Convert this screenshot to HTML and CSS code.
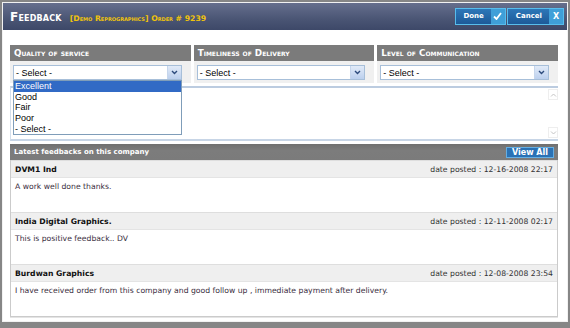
FILE: index.html
```html
<!DOCTYPE html>
<html lang="en">
<head>
    <meta charset="UTF-8">
    <title>Feedback</title>
    <link rel="stylesheet" href="styles.css">
</head>
<body>
    <div class="dialog">
        <div class="titlebar">
            <div class="title">
                <span class="title-main">Feedback</span>
                <span class="title-sub">[Demo Reprographics] Order # 9239</span>
            </div>
            <div class="actions">
                <a class="btn" href="#">
                    <span class="btn-label">Done</span>
                    <span class="btn-icon">
                        <svg width="9" height="8" viewBox="0 0 9 8"><path d="M1 4.5 L3.5 7 L8 1" fill="none" stroke="#fff" stroke-width="1.8"/></svg>
                    </span>
                </a>
                <a class="btn" href="#">
                    <span class="btn-label">Cancel</span>
                    <span class="btn-icon">X</span>
                </a>
            </div>
        </div>

        <div class="content">
            <div class="ratings">
                <div class="rating">
                    <div class="rating-head">Quality of service</div>
                    <div class="rating-body">
                        <div class="select">
                            <span class="select-text">- Select -</span>
                            <span class="select-arrow"><svg width="7" height="5" viewBox="0 0 7 5"><path d="M1 1 L3.5 3.5 L6 1" fill="none" stroke="#2c4a7c" stroke-width="1.4"/></svg></span>
                            <ul class="options">
                                <li class="selected">Excellent</li>
                                <li>Good</li>
                                <li>Fair</li>
                                <li>Poor</li>
                                <li>- Select -</li>
                            </ul>
                        </div>
                    </div>
                </div>
                <div class="rating">
                    <div class="rating-head">Timeliness of Delivery</div>
                    <div class="rating-body">
                        <div class="select">
                            <span class="select-text">- Select -</span>
                            <span class="select-arrow"><svg width="7" height="5" viewBox="0 0 7 5"><path d="M1 1 L3.5 3.5 L6 1" fill="none" stroke="#2c4a7c" stroke-width="1.4"/></svg></span>
                        </div>
                    </div>
                </div>
                <div class="rating">
                    <div class="rating-head">Level of Communication</div>
                    <div class="rating-body">
                        <div class="select">
                            <span class="select-text">- Select -</span>
                            <span class="select-arrow"><svg width="7" height="5" viewBox="0 0 7 5"><path d="M1 1 L3.5 3.5 L6 1" fill="none" stroke="#2c4a7c" stroke-width="1.4"/></svg></span>
                        </div>
                    </div>
                </div>
            </div>

            <div class="comment-box">
                <div class="scrollbar">
                    <span class="scroll-btn"><svg width="7" height="4" viewBox="0 0 7 4"><path d="M1 3.5 L3.5 1 L6 3.5" fill="none" stroke="#c4c4c4" stroke-width="1"/></svg></span>
                    <span class="scroll-btn"><svg width="7" height="4" viewBox="0 0 7 4"><path d="M1 0.5 L3.5 3 L6 0.5" fill="none" stroke="#c4c4c4" stroke-width="1"/></svg></span>
                </div>
            </div>

            <div class="section-bar">
                <span>Latest feedbacks on this company</span>
                <a class="view-all" href="#">View All</a>
            </div>

            <div class="feedbacks">
                <div class="feedback">
                    <div class="feedback-head">
                        <span class="feedback-name">DVM1 Ind</span>
                        <span class="feedback-date">date posted : 12-16-2008 22:17</span>
                    </div>
                    <p class="feedback-text">A work well done thanks.</p>
                </div>
                <div class="feedback">
                    <div class="feedback-head">
                        <span class="feedback-name">India Digital Graphics.</span>
                        <span class="feedback-date">date posted : 12-11-2008 02:17</span>
                    </div>
                    <p class="feedback-text">This is positive feedback.. DV</p>
                </div>
                <div class="feedback">
                    <div class="feedback-head">
                        <span class="feedback-name">Burdwan Graphics</span>
                        <span class="feedback-date">date posted : 12-08-2008 23:54</span>
                    </div>
                    <p class="feedback-text">I have received order from this company and good follow up , immediate payment after delivery.</p>
                </div>
            </div>
        </div>
    </div>
</body>
</html>
```

FILE: styles.css
```css
body {
    margin: 0;
    padding: 2px 2px 6px 2px;
    background-color: #868686;
    font-family: "DejaVu Sans", Verdana, sans-serif;
    font-size: 7.7px;
    color: #222;
}

.dialog {
    height: 320px;
    box-sizing: border-box;
    border: 1px solid #f2f2f2;
    background-color: #fff;
}

/* title bar */
.titlebar {
    height: 27px;
    display: flex;
    align-items: center;
    justify-content: space-between;
    padding: 0 3px 0 7px;
    background: linear-gradient(#666f8d, #4a5574 60%, #3d4868);
}

.title {
    display: flex;
    align-items: baseline;
    gap: 8px;
}

.title-main {
    font-variant: small-caps;
    font-size: 12px;
    font-weight: bold;
    color: #fff;
    letter-spacing: 0.2px;
}

.title-sub {
    font-variant: small-caps;
    font-size: 7.7px;
    font-weight: bold;
    color: #f1c40a;
}

.actions {
    display: flex;
    gap: 1px;
    margin-top: -1px;
}

.btn {
    display: flex;
    height: 17px;
    box-sizing: border-box;
    border: 1px solid #58bdec;
    background-color: #3f9fd8;
    text-decoration: none;
}

.btn-label {
    display: flex;
    align-items: center;
    padding: 0 7px 0 8px;
    background: linear-gradient(#2d77b8, #1d5a98);
    color: #fff;
    font-weight: bold;
    font-size: 7px;
}

.btn-icon {
    width: 14px;
    display: flex;
    align-items: center;
    justify-content: center;
    color: #fff;
    font-weight: bold;
    font-size: 8px;
}

/* content */
.content {
    padding: 15px 9px 0 7px;
}

.ratings {
    display: grid;
    grid-template-columns: repeat(3, 1fr);
    gap: 3px;
}

.rating-head {
    height: 16px;
    display: flex;
    align-items: center;
    padding-left: 4px;
    background-color: #7b7b7b;
    color: #fff;
    font-weight: bold;
    font-variant: small-caps;
    font-size: 8.8px;
}

.rating-body {
    height: 22px;
    box-sizing: border-box;
    padding: 4px 9px 0 3px;
    background-color: #f0f0f0;
}

.select {
    position: relative;
    height: 15px;
    box-sizing: border-box;
    display: flex;
    align-items: center;
    border: 1px solid #a7bfd9;
    background-color: #fff;
    font-family: "Liberation Sans", Arial, sans-serif;
    font-size: 9px;
    color: #000;
}

.select-text {
    flex: 1;
    padding-left: 2px;
}

.select-arrow {
    width: 13px;
    height: 13px;
    display: flex;
    align-items: center;
    justify-content: center;
    background: linear-gradient(#e2ebf8, #bcd0ee);
    border-left: 1px solid #c6d6ec;
}

.options {
    position: absolute;
    left: -1px;
    right: -1px;
    top: 14px;
    margin: 0;
    padding: 0;
    list-style: none;
    border: 1px solid #7f9db9;
    background-color: #fff;
    z-index: 2;
}

.options li {
    height: 10.7px;
    line-height: 10.7px;
    padding-left: 1px;
}

.options li.selected {
    background-color: #316ac5;
    color: #fff;
}

.comment-box {
    position: relative;
    height: 55px;
    box-sizing: border-box;
    margin-top: 3px;
    border-top: 2px solid #bccce0;
    border-left: 1px solid #d4dfec;
    border-bottom: 2px solid #c7d5e6;
    display: flex;
    justify-content: flex-end;
}

.scrollbar {
    width: 10px;
    display: flex;
    flex-direction: column;
    justify-content: space-between;
    padding: 1px 0;
}

.scroll-btn {
    height: 9px;
    display: flex;
    align-items: center;
    justify-content: center;
    border: 1px solid #eeeeee;
}

.section-bar {
    height: 16px;
    margin-top: 3px;
    display: flex;
    align-items: center;
    justify-content: space-between;
    padding: 0 4px;
    background: linear-gradient(#6f6f6f, #7c7c7c 40%, #7b7b7b);
    color: #fff;
    font-weight: bold;
    font-size: 7px;
}

.view-all {
    height: 11px;
    box-sizing: border-box;
    display: flex;
    align-items: center;
    padding: 0 5px;
    border: 1px solid #64aee3;
    background-color: #2a72b5;
    color: #fff;
    text-decoration: none;
    font-size: 8px;
}

.feedbacks {
    border: 1px solid #cbcbcb;
    border-top: none;
    box-shadow: 0 1px 0 #e4e4e4;
}

.feedback {
    height: 52px;
    box-sizing: border-box;
    border-top: 1px solid #dedede;
}

.feedback-head {
    height: 16px;
    display: flex;
    align-items: center;
    justify-content: space-between;
    padding: 0 4px;
    background-color: #efefef;
    border-bottom: 1px solid #e4e4e4;
}

.feedback-name {
    font-weight: bold;
    font-size: 7.7px;
    color: #111;
}

.feedback-date {
    color: #333;
}

.feedback-text {
    margin: 4px 0 0 4px;
    color: #3a2e3e;
}
```
